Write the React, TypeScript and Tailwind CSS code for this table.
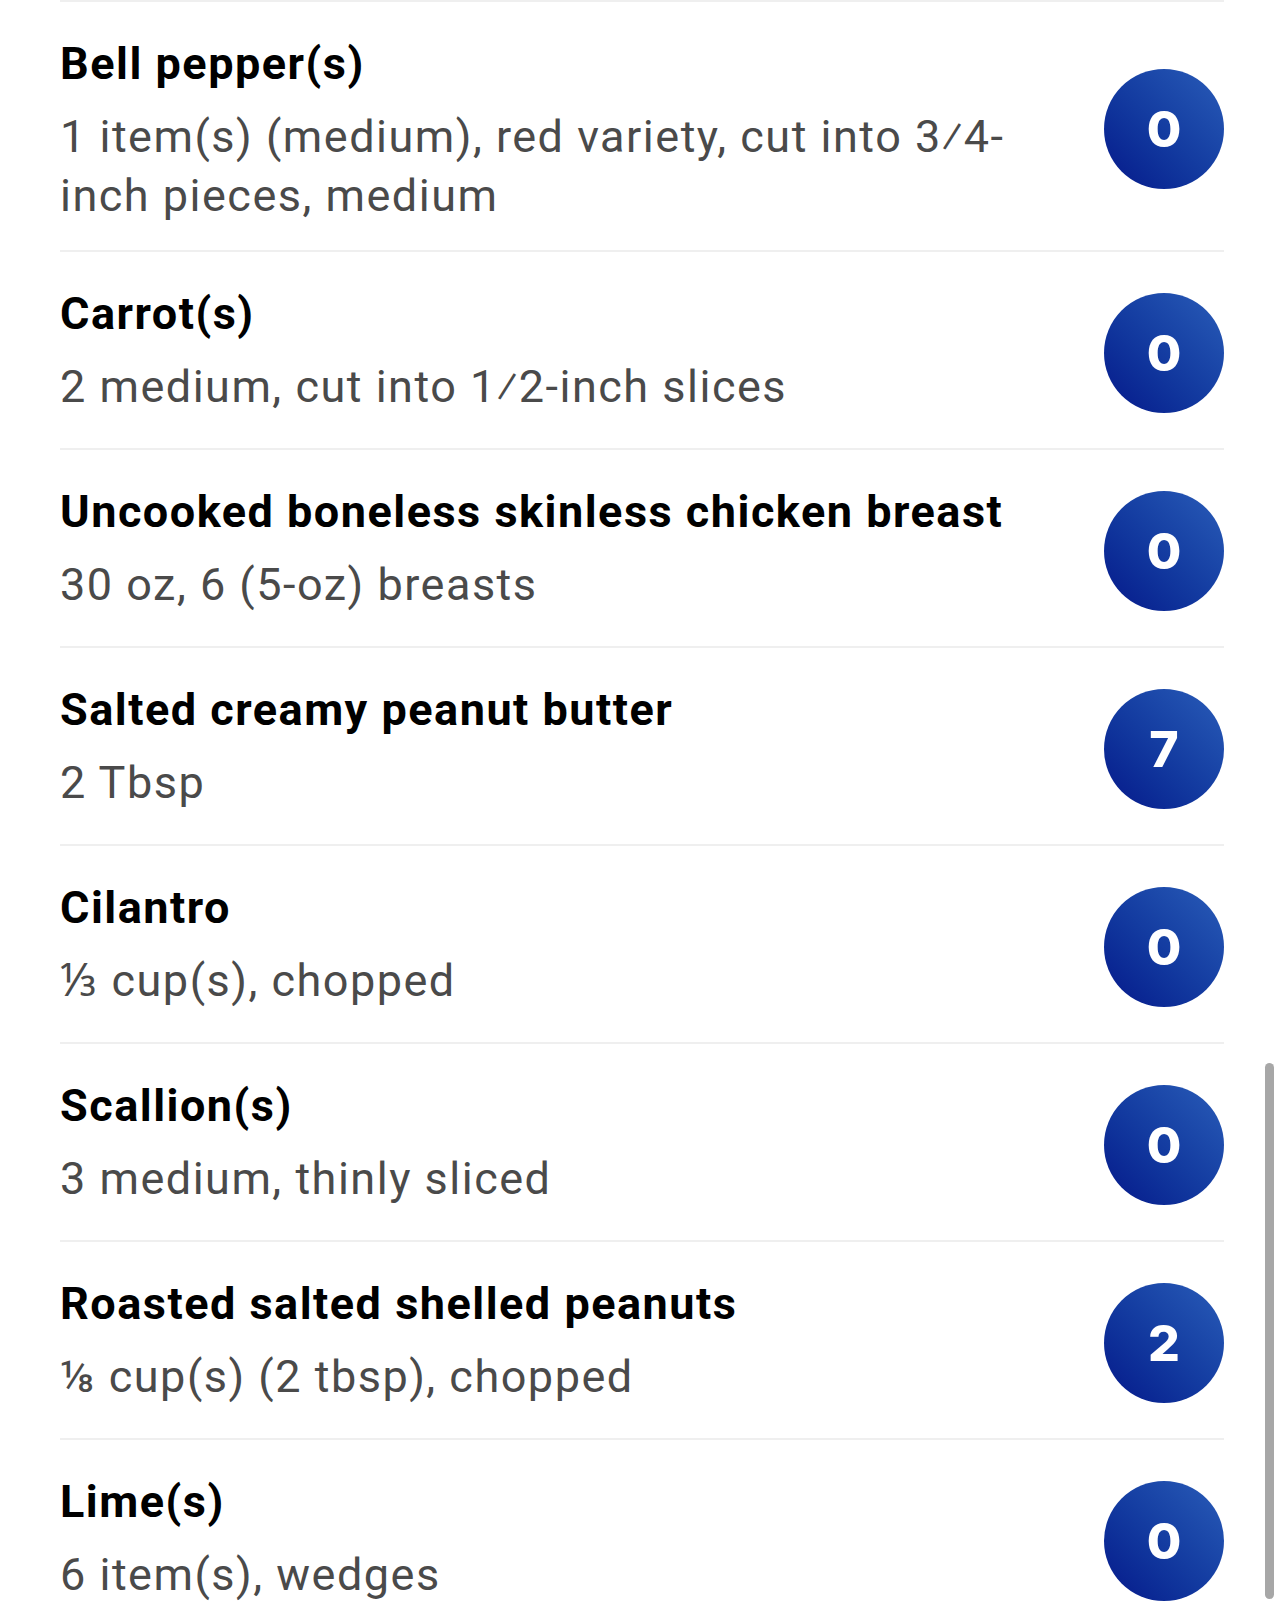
import React from "react";

const items = [
  { name: "Bell pepper(s)", desc: "1 item(s) (medium), red variety, cut into 3\u20444-inch pieces, medium", pts: "0" },
  { name: "Carrot(s)", desc: "2 medium, cut into 1\u20442-inch slices", pts: "0" },
  { name: "Uncooked boneless skinless chicken breast", desc: "30 oz, 6 (5-oz) breasts", pts: "0" },
  { name: "Salted creamy peanut butter", desc: "2 Tbsp", pts: "7" },
  { name: "Cilantro", desc: "\u2153 cup(s), chopped", pts: "0" },
  { name: "Scallion(s)", desc: "3 medium, thinly sliced", pts: "0" },
  { name: "Roasted salted shelled peanuts", desc: "\u215B cup(s) (2 tbsp), chopped", pts: "2" },
  { name: "Lime(s)", desc: "6 item(s), wedges", pts: "0" },
];

export default function App() {
  return (
    <div
      className="relative w-full h-[1622px] overflow-hidden bg-white"
      style={{ fontFamily: "Roboto, 'Noto Sans', sans-serif" }}
    >
      <div className="ml-[60px] w-[1164px] border-t-2 border-[#efefef]">
        {items.map((it) => (
          <div
            key={it.name}
            className="flex items-start justify-between min-h-[198px] py-[25px] border-b-2 border-[#efefef]"
          >
            <div className="w-[990px] flex flex-col pt-[9px]">
              <div className="text-[45px] leading-[56px] font-bold text-black tracking-[1.5px]">
                {it.name}
              </div>
              <div className="mt-[15px] text-[45px] leading-[59px] text-[#4a4a4a] tracking-[1.5px] [font-feature-settings:'numr'_0,'dnom'_0,'frac'_0]">
                {it.desc}
              </div>
            </div>
            <div className="self-center mt-[5px] w-[120px] h-[120px] rounded-full bg-linear-to-tr from-[#08168a] to-[#2a5cb8] flex items-center justify-center shrink-0">
              <span
                className="text-white text-[50px] font-extrabold leading-none"
                style={{ fontFamily: "Inter, sans-serif" }}
              >
                {it.pts}
              </span>
            </div>
          </div>
        ))}
      </div>
      <div className="absolute left-[1265px] top-[1063px] w-[9px] h-[536px] rounded-full bg-[#a7a7a7]" />
    </div>
  );
}
